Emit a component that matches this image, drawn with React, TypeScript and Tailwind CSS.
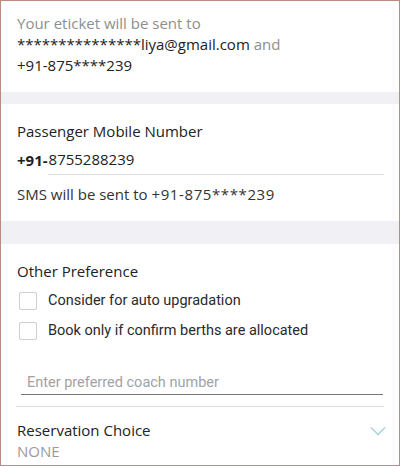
export default function App() {
	return (
		<div className="w-[400px] h-[466px] overflow-hidden border border-[#b98b84] bg-white font-['Open_Sans',sans-serif] text-[15px] leading-[21px] text-[#222]">
			{/* eticket info */}
			<div className="px-4 pt-[12px] pb-[16px]">
				<p className="text-[#8e8e8e]">Your eticket will be sent to</p>
				<p>
					***************liya@gmail.com{" "}
					<span className="text-[#8e8e8e]">and</span>
				</p>
				<p>+91-875****239</p>
			</div>
			<div className="h-[12px] bg-[#f1f1f5]" />

			{/* mobile number */}
			<div className="pt-[17px] pb-[16px]">
				<p className="px-4">Passenger Mobile Number</p>
				<div className="mt-[7px] flex items-end pl-4 pr-[15px]">
					<span className="font-bold pb-[4px]">+91-</span>
					<div className="flex-1 border-b border-[#e2e2e2] pb-[4px] pl-[1px]">8755288239</div>
				</div>
				<p className="px-4 mt-[9px] text-[#333]">
					SMS will be sent to <span className="tracking-[0.6px]">+91-875****239</span>
				</p>
			</div>
			<div className="h-[23px] bg-[#f1f1f5]" />

			{/* other preference */}
			<div className="pt-[17px]">
				<p className="px-4">Other Preference</p>
				<div className="mt-[8px] flex flex-col gap-[9px] pl-[18px] font-['Roboto',sans-serif] text-[14.5px]">
					<label className="flex items-center gap-[11px]">
						<span className="w-[18px] h-[18px] border border-[#cfcfcf] rounded-[2px]" />
						<span className="text-[#2a2a2a]">Consider for auto upgradation</span>
					</label>
					<label className="flex items-center gap-[11px]">
						<span className="w-[18px] h-[18px] border border-[#cfcfcf] rounded-[2px]" />
						<span className="text-[#2a2a2a]">Book only if confirm berths are allocated</span>
					</label>
				</div>
				<div className="mt-[30px] ml-[20px] mr-[16px] border-b border-[#7a7a7a] pl-[6px] pb-[1px]">
					<span className="text-[#a2a2a2] font-['Roboto',sans-serif] text-[14.5px]">Enter preferred coach number</span>
				</div>
				<div className="mt-[11px] mx-[15px] border-t border-[#dcdcdc]" />
				<div className="flex items-start justify-between pl-4 pr-[13px] pt-[13px]">
					<div>
						<p>Reservation Choice</p>
						<p className="text-[#9a9a9a]">NONE</p>
					</div>
					<svg width="16" height="10" viewBox="0 0 16 10" className="mt-[6px]" fill="none">
						<path d="M1 1.5 L8 8.5 L15 1.5" stroke="#a6d0de" strokeWidth="1.5" />
					</svg>
				</div>
			</div>
		</div>
	);
}
